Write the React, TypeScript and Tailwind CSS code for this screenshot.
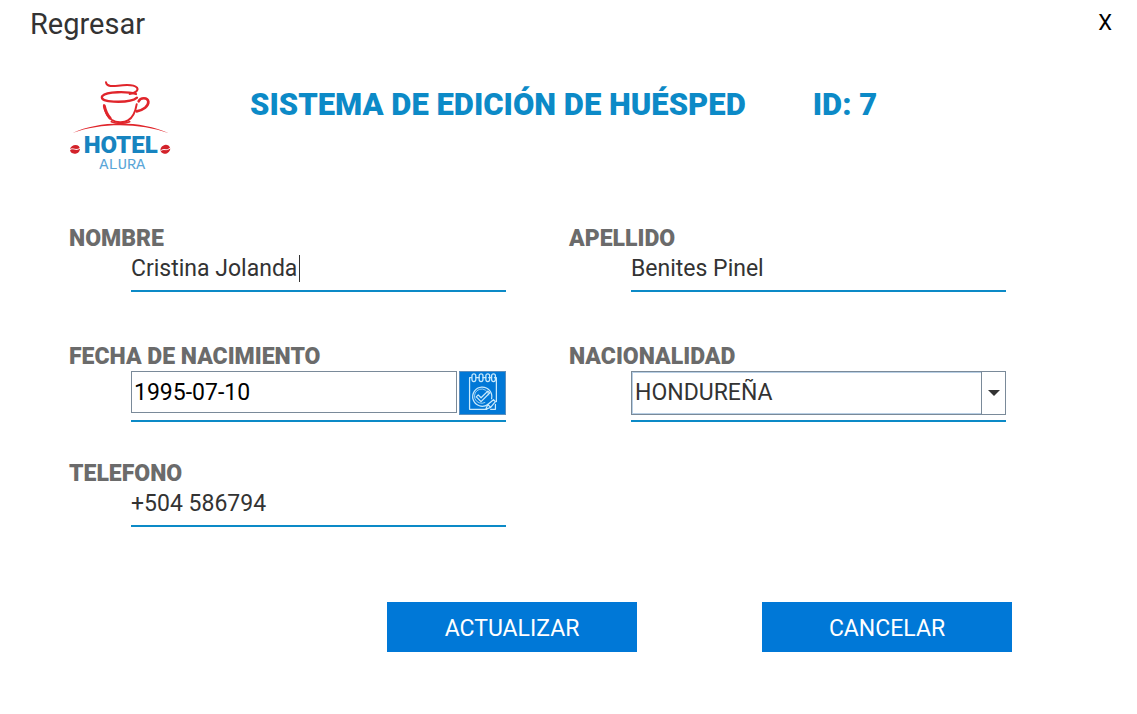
import React, { useState } from "react";

function Logo() {
  return (
    <svg viewBox="0 0 360 330" className="h-[110px] w-[120px] shrink-0" role="img" aria-label="Hotel Alura">
      <g fill="none" stroke="#e0252b" strokeLinecap="round" strokeLinejoin="round">
        <path d="M138 37c2 14 20 12 36 10 22-3 48-4 57 6 6 9-6 16-22 19" strokeWidth="6" />
        <path d="M228 72c-26-8-88-8-101 6-7 11 12 16 34 17 24 1 58-1 70-12" strokeWidth="7" />
        <path d="M132 106c3 20 10 34 24 44 12 8 36 9 48 1 14-8 22-24 26-48" strokeWidth="6" />
        <path d="M133 108c3 14 9 27 17 36" strokeWidth="9" />
        <path d="M236 94c5-12 27-13 29 1 1 14-15 25-35 29" strokeWidth="8" />
        <path d="M154 155c15 7 39 7 55 0" strokeWidth="5" />
      </g>
      <path d="M38 189C118 152 240 150 327 190C240 158 122 158 38 189Z" fill="#e0252b" />
      <g fill="#d3222a">
        <ellipse cx="45" cy="238" rx="15" ry="13" transform="rotate(-18 45 238)" />
        <ellipse cx="316" cy="238" rx="15" ry="13" transform="rotate(-25 316 238)" />
      </g>
      <path d="M30 239c9-8 18 6 30-5M302 243c9-10 17 2 28-9" stroke="#fff" strokeWidth="3" fill="none" />
      <text
        x="182"
        y="249"
        textAnchor="middle"
        fontFamily="Roboto, sans-serif"
        fontWeight="900"
        fontSize="72"
        fill="#1784c0"
      >
        HOTEL
      </text>
      <text
        x="187"
        y="298"
        textAnchor="middle"
        fontFamily="'Liberation Mono', monospace"
        fontSize="46"
        fill="#5aa6d8"
      >
        ALURA
      </text>
    </svg>
  );
}

function CalendarIcon() {
  return (
    <svg
      viewBox="0 0 47 44"
      className="h-[44px] w-[47px]"
      fill="none"
      stroke="#c9eafc"
      strokeWidth="1.3"
      strokeLinecap="round"
      strokeLinejoin="round"
      aria-hidden="true"
    >
      <path d="M12 6H10v33h18M36 6h2v25M17 6h3M24 6h3M30 6h3" />
      <rect x="12.500" y="2" width="4" height="8" rx="2" />
      <rect x="20" y="2" width="4" height="8" rx="2" />
      <rect x="27" y="2" width="4" height="8" rx="2" />
      <rect x="33" y="2" width="4" height="8" rx="2" />
      <path d="M29 34A10 10 0 1 1 33 28" />
      <path d="M26 32a7.500 7.500 0 1 1 4-8" strokeWidth="0.8" />
      <path d="M17 26l2-2 3 3 7-7 2 2-9 9z" />
      <path d="M27 39l2-5 6-5 2 2-5 6zM32 39h5v-5M29 34l3 3" />
    </svg>
  );
}

const labelClass = "block pt-px text-[23px] leading-6 font-black text-[#6b6b6b]";
const inputClass =
  "block h-[41px] w-full border-b-2 border-[#0c8ac7] bg-transparent pb-1 text-[23px] leading-7 text-[#333333] outline-none";

type TextFieldProps = {
  id: string;
  label: string;
  initial: string;
  caret?: boolean;
};

function TextField({ id, label, initial, caret }: TextFieldProps) {
  const [value, setValue] = useState(initial);
  return (
    <div>
      <label htmlFor={id} className={labelClass}>{label}</label>
      <div className="relative ml-[62px]">
        <input id={id} value={value} onChange={(e) => setValue(e.target.value)} className={inputClass} />
        {caret && <span className="absolute top-1 left-[168px] h-[27px] w-px bg-[#333333]" />}
      </div>
    </div>
  );
}

export default function App() {
  const [date, setDate] = useState("1995-07-10");
  return (
    <main className="min-h-screen bg-white font-['Roboto',sans-serif]">
      <nav className="flex h-12 items-center justify-between pr-[25px] pl-[30px]">
        <button type="button" className="text-[29px] leading-8 text-[#333333]">Regresar</button>
        <button type="button" aria-label="Cerrar" className="pb-0.5 text-[22px] leading-7 text-black">X</button>
      </nav>

      <header className="flex pt-[22px] pl-[60px]">
        <Logo />
        <h1 className="flex gap-[67px] pt-[17px] pl-[70px] text-[31px] leading-9 font-black text-[#0c8ac7]">
          <span>SISTEMA DE EDICIÓN DE HUÉSPED</span>
          <span>ID: 7</span>
        </h1>
      </header>

      <form onSubmit={(e) => e.preventDefault()} className="pt-[46px]">
        <div className="grid grid-cols-2 gap-x-[63px] pr-[131px] pl-[69px]">
          <TextField id="nombre" label="NOMBRE" initial="Cristina Jolanda" caret />
          <TextField id="apellido" label="APELLIDO" initial="Benites Pinel" />

          <div className="pt-[52px]">
            <label htmlFor="fecha" className={labelClass}>FECHA DE NACIMIENTO</label>
            <div className="mt-0.5 ml-[62px] flex gap-0.5 border-b-2 border-[#0c8ac7] pb-[5px]">
              <input
                id="fecha"
                value={date}
                onChange={(e) => setDate(e.target.value)}
                className="h-[42px] min-w-0 flex-1 border border-[#7a8a99] px-0.5 text-[23px] leading-7 text-black outline-none"
              />
              <button
                type="button"
                aria-label="Abrir calendario"
                className="flex h-[44px] w-[47px] items-center justify-center border border-[#5b8fbe] bg-[#0078d7]"
              >
                <CalendarIcon />
              </button>
            </div>
          </div>

          <div className="pt-[52px]">
            <label htmlFor="nacionalidad" className={labelClass}>NACIONALIDAD</label>
            <div className="mt-0.5 ml-[62px] border-b-2 border-[#0c8ac7] pb-[5px]">
              <div className="relative flex h-[44px] border border-[#7a8a99]">
                <select
                  id="nacionalidad"
                  defaultValue="HONDUREÑA"
                  className="w-full appearance-none border border-[#b8cfe5] bg-white pl-0.5 text-[23px] leading-7 text-[#333333] outline-none"
                >
                  <option>HONDUREÑA</option>
                </select>
                <span className="pointer-events-none absolute inset-y-0 right-0 flex w-6 items-center justify-center border-l border-[#7a8a99] bg-white">
                  <svg viewBox="0 0 12 6" className="h-1.5 w-3" aria-hidden="true">
                    <path d="M0 0h12L6 6z" fill="#333333" />
                  </svg>
                </span>
              </div>
            </div>
          </div>

          <div className="pt-[39px]">
            <TextField id="telefono" label="TELEFONO" initial="+504 586794" />
          </div>
        </div>

        <div className="flex justify-end gap-[125px] pt-[75px] pr-[125px]">
          <button type="submit" className="h-[50px] w-[250px] bg-[#0078d7] pt-1 text-[23px] leading-7 text-white">
            ACTUALIZAR
          </button>
          <button type="button" className="h-[50px] w-[250px] bg-[#0078d7] pt-1 text-[23px] leading-7 text-white">
            CANCELAR
          </button>
        </div>
      </form>
    </main>
  );
}
